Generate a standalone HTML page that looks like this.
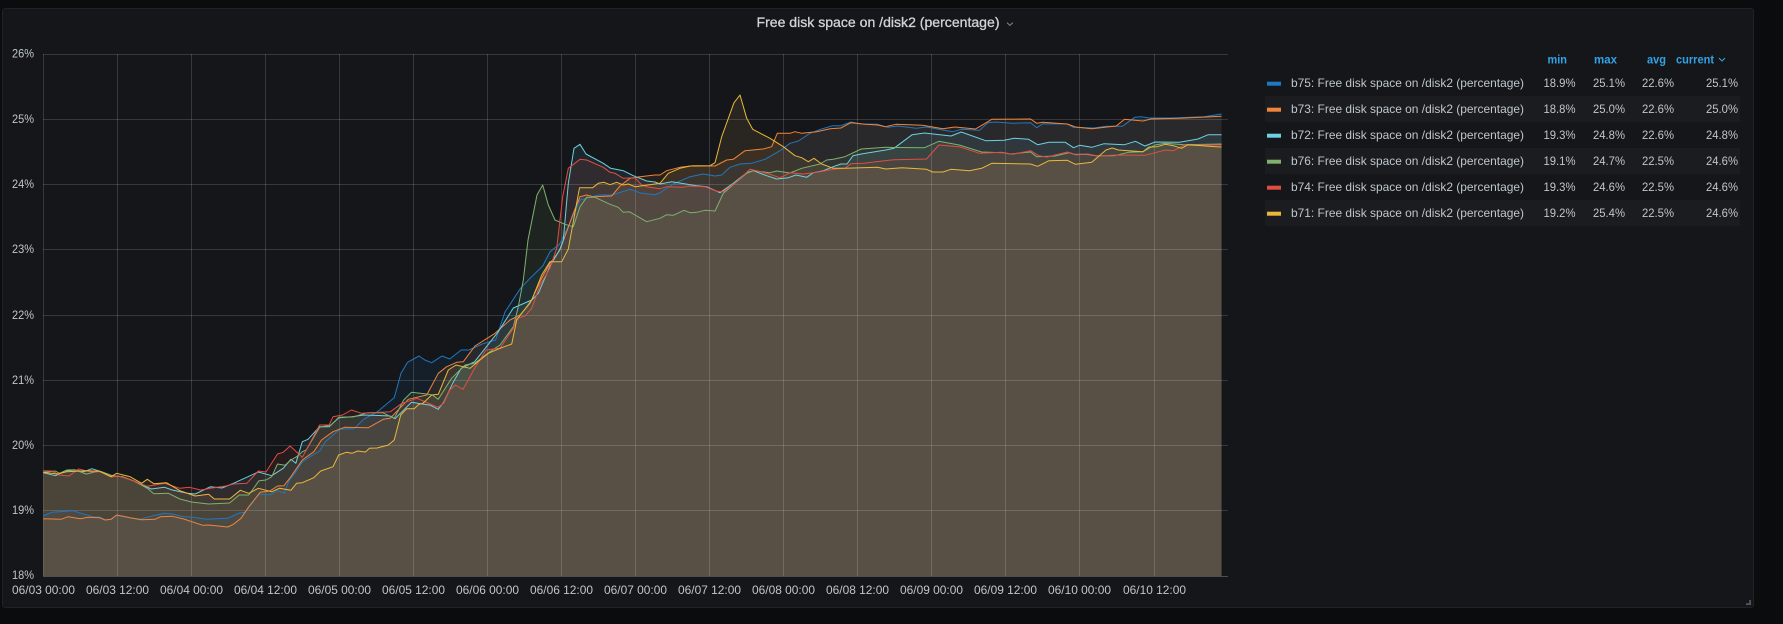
<!DOCTYPE html>
<html>
<head>
<meta charset="utf-8">
<title>Free disk space</title>
<style>
html,body{margin:0;padding:0;width:1783px;height:624px;overflow:hidden;background:#0b0c0e}
svg{display:block}
text{font-family:"Liberation Sans",sans-serif}
.a{font-size:12px;fill:#bfc6cd}
.l{font-size:12px;fill:#bfc6cd}
.h{font-size:12px;fill:#33a2e5;font-weight:700}
.s{fill:none;stroke-width:1;stroke-linejoin:round}
.f{fill-opacity:.1;stroke:none}
.g line{stroke:#fff;stroke-opacity:.15;stroke-width:1}
</style>
</head>
<body>
<svg width="1783" height="624" viewBox="0 0 1783 624" xmlns="http://www.w3.org/2000/svg">
<rect x="0" y="0" width="1783" height="624" fill="#0b0c0e"/>
<rect x="2.5" y="8.5" width="1751" height="599" rx="3" fill="#141619" stroke="#202226"/>

<text x="756.5" y="27" font-size="14" fill="#d0d4d8" stroke="#d0d4d8" stroke-width=".3" textLength="243" lengthAdjust="spacingAndGlyphs">Free disk space on /disk2 (percentage)</text>
<path d="M1007 22.7l2.9 2.7 2.9-2.7" fill="none" stroke="#7b7f84" stroke-width="1.1"/>

<!-- series fill -->
<g id="fills">
<polygon class="f" fill="#1F78C1" points="43.2,576.3 43.2,516 51.7,512.3 59.3,511.7 72.7,510.7 82.3,513.7 93.8,517 99.5,517 105.2,520 111,519.3 116.7,515.3 126.3,517.3 139.7,519.3 153,515.7 164.6,513.3 172.2,514 183.7,516.7 191.4,517 206.7,519.3 227.7,518.3 239.2,513 244.9,512.3 252.6,502.7 258.3,494.3 269.8,494.7 277.5,490.7 284.3,493 288.9,481 294.7,473.3 302.3,461.7 310,456.7 319.6,451 325.3,441.7 336.8,431.7 340.6,429 354,428.7 363.6,419.3 377,412 382.7,407.3 394.2,397.7 401,373.3 407.6,362.3 419,356 424.8,360 431.7,362.7 442,356 449.7,359 461.2,350 468.8,350 482.2,344 495.6,340 505,312 520.5,288.3 530,278.3 542.7,266 550,251.7 559.5,244.3 570,223 580,200 590,197.3 598.3,195 611.7,195 630,189.3 641.7,193.3 655,194.7 660,192.7 673.3,184 690,176.7 703.3,174 715,176 721.7,175 730,167.3 740,164 751.7,163.3 765,159.3 780,150.7 790,143.3 798.3,141 810,133.3 820.4,129.3 832.7,125.7 840.8,125.7 851,122 861.2,124 877.6,124.3 887.8,127.3 898,126 916.3,128.3 926.5,127 947,130.7 953,131.7 961.2,129.3 979.6,130.3 987.8,122.7 996,122 1012.2,123.3 1030.6,122.7 1036.7,127.7 1042.9,123.7 1067.3,124 1073.5,127.3 1093.9,128 1106.1,126.3 1122.4,126.3 1134.7,117.3 1140.8,116.7 1149,118 1171.4,118 1204,116.7 1221.6,114 1221.6,576.3"/>
<polygon class="f" fill="#EF843C" points="43.2,576.3 43.2,518.7 61.2,519.3 68.1,516.7 80.4,518.7 88,517.3 99.5,517.7 105.2,520 111,519.3 116.7,515 130,517.7 141.6,519.7 155,519.3 160.7,516.7 172.2,516.3 183.7,519 202.8,525.3 208.6,525 227.7,527 233.4,524.3 241,518.3 248.8,506.7 260.2,492.3 269.8,491 277.5,486 284,485.7 290.9,476.7 302.3,460 313.8,451.7 321.5,440 333,431.7 344.4,427.3 368.3,427.7 383.3,419.3 390,418.3 393.3,415 408.3,399.3 426.7,395 438.3,373.3 446.7,366.7 456.7,362.3 463.3,361.7 475,346 495,333.3 510,320 520,315 530,303.3 541.7,278.3 550,263.3 560,250 573.3,213.3 580,196.7 586.7,195 593.3,196.7 611.7,196 620,186 630,178.3 640,176.7 655,175 660,175 666.7,170.7 680,167.3 693.3,165.7 715,166 726.7,160 733.3,159.3 745,150.7 763.3,149 771.7,146.7 777.3,133.3 790,133.3 795,131.7 801.7,133.3 816.7,131.7 830,128.7 840.8,128 851,122.7 865.3,124.3 877.6,125 885.7,126.7 895.9,124.3 922.4,125.3 942.9,128.7 955,127 975.5,129 991.8,119.3 1030.6,119 1036.7,123.3 1042.9,122.3 1067.3,124 1075.5,127 1091.8,128.7 1116.3,126 1124.5,119.3 1142.9,121 1151,119 1179.6,118.3 1221.6,116.3 1221.6,576.3"/>
<polygon class="f" fill="#6ED0E0" points="43.2,576.3 43.2,472.7 55.5,475.7 65,471 74.6,470 84.2,471.7 91.8,468.7 101.4,471.7 112.9,476 122.5,476.7 134,481 151.2,489 164.6,487.3 172.2,490 187.5,493.3 195.2,494 210.5,486.7 222,488 233.4,483.3 258.3,472 271.7,475.7 283.2,468.3 290.9,459.3 295.8,463.3 302.3,441.7 308,439.3 319.6,426.7 329.1,426.7 338.7,417.7 352.1,416.7 363.6,415 390.4,416 395,418.7 411.4,402.3 430.5,405.3 438.2,409.3 443.9,401.7 453.5,381.7 461.2,368.3 474.6,361.7 498.3,331.7 513.3,308 531.7,300 538.3,293.3 550,266 559.5,250 563.3,240 568.3,183.3 574,148.3 580,144.3 586,154 603.3,163.3 610.7,168.3 623.3,170.7 633.3,175.7 646.7,181 655,182 660,184 671.7,181.7 696.7,185.7 706.7,186.7 720,192.7 733.3,183.3 746.7,172.7 753.3,170.7 766.7,175.7 776.7,179 788.3,177.7 796,175 806.7,177.3 813.3,172.7 823.3,170.7 833.3,166.7 840.8,164 847,164 853,155.7 861.2,154 885.7,150 893.9,148.3 912.2,134.7 924.5,133 951,136 961.2,132 985.7,140.7 1004,140.3 1014.3,138.3 1028.6,139.3 1037.6,144.7 1049,142.3 1065.3,142.3 1073.5,147.7 1079.6,145.3 1091.8,147.3 1104,143.7 1124.5,144.7 1135.5,141.3 1144.9,146 1155.1,142 1179.6,142.3 1198,139 1208.2,134.7 1221.6,134.7 1221.6,576.3"/>
<polygon class="f" fill="#7EB26D" points="43.2,576.3 43.2,472.3 55.5,471 59.3,473.3 67,470 74.6,469.7 86,474 99.5,471 112.9,476 122.5,476.7 134,481 147.3,488.3 153.8,493.7 168.4,493.3 179.9,499 191.4,502 208.6,504 229.6,503 239.2,495 248.8,495 259,480.7 266,480 271.7,476.7 277.5,464 285,465.3 290.9,460 296.6,456.7 302.3,451.7 306.2,450 319.6,427.3 331,425 338.7,417.3 354,416.7 367.4,412.7 382.7,412.7 394.2,418.3 403.7,400 411.4,392.3 426.7,394 432.5,395 438.2,399.3 451.6,378.3 465,365 474.6,363.3 490,351.7 500,345 513.3,326.7 518.3,306.7 523.3,280 528,240 537,195 542.7,185 548.3,205 555,220 565,224.3 573.3,226.7 580,206.7 586.7,197.3 595,197.3 610,204.3 618.3,207.3 623.3,212.3 629.3,211.7 646.7,221.7 660,218.3 666.7,214.7 673.3,215.3 684,210.3 690,212.7 696.7,212.3 705,210.3 715,211 723.3,193.3 736.7,181.7 746.7,173.3 753.3,170.7 770,172.7 776.7,171 790,173 801.7,168.3 820,164 826.7,160 833.3,159.3 844.9,156.7 861.2,149 885.7,147.3 924.5,147.7 938.8,141.3 959.2,145 981.6,152 1004,152.7 1010.2,154 1030.6,152 1036.7,156.7 1055.1,156 1069.4,152.7 1075.5,154.7 1085.7,154.3 1095.9,155.7 1114.3,155.7 1128.6,152.3 1142.9,151.7 1155,145 1165.3,143.3 1183.7,144.7 1221.6,144 1221.6,576.3"/>
<polygon class="f" fill="#E24D42" points="43.2,576.3 43.2,470.7 51.7,471 59.3,475 68.9,476 78.5,469 90,471.7 100.3,471.7 111,477 118.6,476 134,481 147.3,486.3 164.6,483.3 179.9,488.3 189.4,487.3 200.9,490 210.5,488.3 225.8,486 233.4,484 246.8,483.3 258.3,471 266,472 277.5,454 283.2,452.3 290.1,446 302.3,457.3 319.6,425 329.1,425 333,416.7 342.5,415 351.3,410 361.7,413.3 390.4,411.7 401.9,403.3 417.1,398.3 432.5,405 438.2,407.3 443.9,402.7 449.7,390 455.4,385 463,389.3 474.6,368.3 486,350 500,348.3 513.3,328.3 516.7,318.3 525,316 531.7,308.3 540,285 550,268 556.7,248.3 562.7,196.7 568.3,168.3 580,159.3 586.7,160 603.3,167.3 610,172.3 615,173.3 623.3,178.3 635,177.7 641.7,185 646.7,186.7 660,188.7 666.7,186.7 683.3,187.3 688.3,186 705,186.7 716.7,191.3 723.3,191.7 736.7,181.7 750,169.3 756.7,170.7 770,174.3 780,177.7 790,172.7 803.3,174 820,171.7 833.3,169.3 844.9,168.3 851,163.7 863.3,163.3 893.9,159.7 926.5,159 938.8,145 959.2,146.7 979.6,153.3 1002,152.3 1012.2,154.3 1030.6,150.7 1038.8,155.7 1047,157 1067.3,152 1075.5,154.3 1087.8,154 1098,156 1116.3,155 1144.9,155.3 1165.3,150 1173.5,150.7 1183.7,145.3 1221.6,145 1221.6,576.3"/>
<polygon class="f" fill="#EAB86A" points="43.2,576.3 43.2,472.3 57.4,474 67,471.7 86,470.7 99.5,471.3 111,476.7 116.7,473.3 130,476.7 141.6,483.3 147.3,479.3 153.8,483.7 166.5,482.7 179.9,490.7 195.2,496 208.6,494.3 214.3,499 229.6,499 240.3,490.3 248.8,493.3 258.3,488.3 271.7,491.7 279.4,488.3 290.9,490.3 296.6,483.3 302.3,482.7 313.8,477.7 320.7,471 333,466.7 338.7,455 346.3,452.3 352,453.3 357.8,451 365.5,452 369.3,448.3 377,448 388.4,445 394.2,440 400.7,415 406.7,408.7 414.1,408.7 419,404.3 422.9,403.3 431.7,395 438.3,394.3 448.3,370 456,365 470,368.3 480,360 488.3,353.3 500,348.3 511.7,344 516.7,320 531.7,300 541.7,275 550,261.7 561.7,261.7 568.3,249 579.5,187.7 592.7,187.7 598.3,183.3 604,182.3 610,184.7 616.7,182.3 623.3,185 628.3,184 635,186.7 653.3,184.3 660,183.3 668.3,173.3 680,168.3 690,166 710,165.7 715,162.7 721.7,136.7 734,102.7 740,95 746.7,118.3 752.7,129.3 770,138.3 783.3,146.7 795,155.7 801.7,157.7 808.3,161.7 814,158.3 821.7,164 833.3,168.3 845,168.3 861.2,167.7 877.6,167.3 885.7,169 902,167.7 926.5,169.3 932.7,172 942.9,172 951,169.3 969.4,170.7 981.6,168.3 991.8,163.3 1030.6,164 1037.6,166.3 1049,160.7 1067.3,160.3 1075.5,164.3 1091.8,162.3 1106,150 1112.2,148 1118.4,150 1142.9,151.7 1149,147 1157.1,146.7 1165.3,144.3 1173.5,145.7 1181.6,148.3 1187.8,144.7 1216.3,146.7 1221.6,147 1221.6,576.3"/>
</g>

<!-- grid -->
<g class="g">
<line x1="43" x2="1228" y1="54.5" y2="54.5"/>
<line x1="43" x2="1228" y1="119.5" y2="119.5"/>
<line x1="43" x2="1228" y1="184.5" y2="184.5"/>
<line x1="43" x2="1228" y1="249.5" y2="249.5"/>
<line x1="43" x2="1228" y1="315.5" y2="315.5"/>
<line x1="43" x2="1228" y1="380.5" y2="380.5"/>
<line x1="43" x2="1228" y1="445.5" y2="445.5"/>
<line x1="43" x2="1228" y1="510.5" y2="510.5"/>
<line x1="43.5" x2="43.5" y1="54" y2="576"/>
<line x1="117.5" x2="117.5" y1="54" y2="576"/>
<line x1="191.5" x2="191.5" y1="54" y2="576"/>
<line x1="265.5" x2="265.5" y1="54" y2="576"/>
<line x1="339.5" x2="339.5" y1="54" y2="576"/>
<line x1="413.5" x2="413.5" y1="54" y2="576"/>
<line x1="487.5" x2="487.5" y1="54" y2="576"/>
<line x1="561.5" x2="561.5" y1="54" y2="576"/>
<line x1="635.5" x2="635.5" y1="54" y2="576"/>
<line x1="709.5" x2="709.5" y1="54" y2="576"/>
<line x1="783.5" x2="783.5" y1="54" y2="576"/>
<line x1="857.5" x2="857.5" y1="54" y2="576"/>
<line x1="931.5" x2="931.5" y1="54" y2="576"/>
<line x1="1005.5" x2="1005.5" y1="54" y2="576"/>
<line x1="1079.5" x2="1079.5" y1="54" y2="576"/>
<line x1="1154.5" x2="1154.5" y1="54" y2="576"/>
</g>
<line x1="43" x2="1228" y1="576.5" y2="576.5" stroke="#4c4f55"/>

<!-- series lines -->
<polyline class="s" stroke="#1F78C1" points="43.2,516 51.7,512.3 59.3,511.7 72.7,510.7 82.3,513.7 93.8,517 99.5,517 105.2,520 111,519.3 116.7,515.3 126.3,517.3 139.7,519.3 153,515.7 164.6,513.3 172.2,514 183.7,516.7 191.4,517 206.7,519.3 227.7,518.3 239.2,513 244.9,512.3 252.6,502.7 258.3,494.3 269.8,494.7 277.5,490.7 284.3,493 288.9,481 294.7,473.3 302.3,461.7 310,456.7 319.6,451 325.3,441.7 336.8,431.7 340.6,429 354,428.7 363.6,419.3 377,412 382.7,407.3 394.2,397.7 401,373.3 407.6,362.3 419,356 424.8,360 431.7,362.7 442,356 449.7,359 461.2,350 468.8,350 482.2,344 495.6,340 505,312 520.5,288.3 530,278.3 542.7,266 550,251.7 559.5,244.3 570,223 580,200 590,197.3 598.3,195 611.7,195 630,189.3 641.7,193.3 655,194.7 660,192.7 673.3,184 690,176.7 703.3,174 715,176 721.7,175 730,167.3 740,164 751.7,163.3 765,159.3 780,150.7 790,143.3 798.3,141 810,133.3 820.4,129.3 832.7,125.7 840.8,125.7 851,122 861.2,124 877.6,124.3 887.8,127.3 898,126 916.3,128.3 926.5,127 947,130.7 953,131.7 961.2,129.3 979.6,130.3 987.8,122.7 996,122 1012.2,123.3 1030.6,122.7 1036.7,127.7 1042.9,123.7 1067.3,124 1073.5,127.3 1093.9,128 1106.1,126.3 1122.4,126.3 1134.7,117.3 1140.8,116.7 1149,118 1171.4,118 1204,116.7 1221.6,114"/>
<polyline class="s" stroke="#EF843C" points="43.2,518.7 61.2,519.3 68.1,516.7 80.4,518.7 88,517.3 99.5,517.7 105.2,520 111,519.3 116.7,515 130,517.7 141.6,519.7 155,519.3 160.7,516.7 172.2,516.3 183.7,519 202.8,525.3 208.6,525 227.7,527 233.4,524.3 241,518.3 248.8,506.7 260.2,492.3 269.8,491 277.5,486 284,485.7 290.9,476.7 302.3,460 313.8,451.7 321.5,440 333,431.7 344.4,427.3 368.3,427.7 383.3,419.3 390,418.3 393.3,415 408.3,399.3 426.7,395 438.3,373.3 446.7,366.7 456.7,362.3 463.3,361.7 475,346 495,333.3 510,320 520,315 530,303.3 541.7,278.3 550,263.3 560,250 573.3,213.3 580,196.7 586.7,195 593.3,196.7 611.7,196 620,186 630,178.3 640,176.7 655,175 660,175 666.7,170.7 680,167.3 693.3,165.7 715,166 726.7,160 733.3,159.3 745,150.7 763.3,149 771.7,146.7 777.3,133.3 790,133.3 795,131.7 801.7,133.3 816.7,131.7 830,128.7 840.8,128 851,122.7 865.3,124.3 877.6,125 885.7,126.7 895.9,124.3 922.4,125.3 942.9,128.7 955,127 975.5,129 991.8,119.3 1030.6,119 1036.7,123.3 1042.9,122.3 1067.3,124 1075.5,127 1091.8,128.7 1116.3,126 1124.5,119.3 1142.9,121 1151,119 1179.6,118.3 1221.6,116.3"/>
<polyline class="s" stroke="#6ED0E0" points="43.2,472.7 55.5,475.7 65,471 74.6,470 84.2,471.7 91.8,468.7 101.4,471.7 112.9,476 122.5,476.7 134,481 151.2,489 164.6,487.3 172.2,490 187.5,493.3 195.2,494 210.5,486.7 222,488 233.4,483.3 258.3,472 271.7,475.7 283.2,468.3 290.9,459.3 295.8,463.3 302.3,441.7 308,439.3 319.6,426.7 329.1,426.7 338.7,417.7 352.1,416.7 363.6,415 390.4,416 395,418.7 411.4,402.3 430.5,405.3 438.2,409.3 443.9,401.7 453.5,381.7 461.2,368.3 474.6,361.7 498.3,331.7 513.3,308 531.7,300 538.3,293.3 550,266 559.5,250 563.3,240 568.3,183.3 574,148.3 580,144.3 586,154 603.3,163.3 610.7,168.3 623.3,170.7 633.3,175.7 646.7,181 655,182 660,184 671.7,181.7 696.7,185.7 706.7,186.7 720,192.7 733.3,183.3 746.7,172.7 753.3,170.7 766.7,175.7 776.7,179 788.3,177.7 796,175 806.7,177.3 813.3,172.7 823.3,170.7 833.3,166.7 840.8,164 847,164 853,155.7 861.2,154 885.7,150 893.9,148.3 912.2,134.7 924.5,133 951,136 961.2,132 985.7,140.7 1004,140.3 1014.3,138.3 1028.6,139.3 1037.6,144.7 1049,142.3 1065.3,142.3 1073.5,147.7 1079.6,145.3 1091.8,147.3 1104,143.7 1124.5,144.7 1135.5,141.3 1144.9,146 1155.1,142 1179.6,142.3 1198,139 1208.2,134.7 1221.6,134.7"/>
<polyline class="s" stroke="#7EB26D" points="43.2,472.3 55.5,471 59.3,473.3 67,470 74.6,469.7 86,474 99.5,471 112.9,476 122.5,476.7 134,481 147.3,488.3 153.8,493.7 168.4,493.3 179.9,499 191.4,502 208.6,504 229.6,503 239.2,495 248.8,495 259,480.7 266,480 271.7,476.7 277.5,464 285,465.3 290.9,460 296.6,456.7 302.3,451.7 306.2,450 319.6,427.3 331,425 338.7,417.3 354,416.7 367.4,412.7 382.7,412.7 394.2,418.3 403.7,400 411.4,392.3 426.7,394 432.5,395 438.2,399.3 451.6,378.3 465,365 474.6,363.3 490,351.7 500,345 513.3,326.7 518.3,306.7 523.3,280 528,240 537,195 542.7,185 548.3,205 555,220 565,224.3 573.3,226.7 580,206.7 586.7,197.3 595,197.3 610,204.3 618.3,207.3 623.3,212.3 629.3,211.7 646.7,221.7 660,218.3 666.7,214.7 673.3,215.3 684,210.3 690,212.7 696.7,212.3 705,210.3 715,211 723.3,193.3 736.7,181.7 746.7,173.3 753.3,170.7 770,172.7 776.7,171 790,173 801.7,168.3 820,164 826.7,160 833.3,159.3 844.9,156.7 861.2,149 885.7,147.3 924.5,147.7 938.8,141.3 959.2,145 981.6,152 1004,152.7 1010.2,154 1030.6,152 1036.7,156.7 1055.1,156 1069.4,152.7 1075.5,154.7 1085.7,154.3 1095.9,155.7 1114.3,155.7 1128.6,152.3 1142.9,151.7 1155,145 1165.3,143.3 1183.7,144.7 1221.6,144"/>
<polyline class="s" stroke="#E24D42" points="43.2,470.7 51.7,471 59.3,475 68.9,476 78.5,469 90,471.7 100.3,471.7 111,477 118.6,476 134,481 147.3,486.3 164.6,483.3 179.9,488.3 189.4,487.3 200.9,490 210.5,488.3 225.8,486 233.4,484 246.8,483.3 258.3,471 266,472 277.5,454 283.2,452.3 290.1,446 302.3,457.3 319.6,425 329.1,425 333,416.7 342.5,415 351.3,410 361.7,413.3 390.4,411.7 401.9,403.3 417.1,398.3 432.5,405 438.2,407.3 443.9,402.7 449.7,390 455.4,385 463,389.3 474.6,368.3 486,350 500,348.3 513.3,328.3 516.7,318.3 525,316 531.7,308.3 540,285 550,268 556.7,248.3 562.7,196.7 568.3,168.3 580,159.3 586.7,160 603.3,167.3 610,172.3 615,173.3 623.3,178.3 635,177.7 641.7,185 646.7,186.7 660,188.7 666.7,186.7 683.3,187.3 688.3,186 705,186.7 716.7,191.3 723.3,191.7 736.7,181.7 750,169.3 756.7,170.7 770,174.3 780,177.7 790,172.7 803.3,174 820,171.7 833.3,169.3 844.9,168.3 851,163.7 863.3,163.3 893.9,159.7 926.5,159 938.8,145 959.2,146.7 979.6,153.3 1002,152.3 1012.2,154.3 1030.6,150.7 1038.8,155.7 1047,157 1067.3,152 1075.5,154.3 1087.8,154 1098,156 1116.3,155 1144.9,155.3 1165.3,150 1173.5,150.7 1183.7,145.3 1221.6,145"/>
<polyline class="s" stroke="#EAB839" points="43.2,472.3 57.4,474 67,471.7 86,470.7 99.5,471.3 111,476.7 116.7,473.3 130,476.7 141.6,483.3 147.3,479.3 153.8,483.7 166.5,482.7 179.9,490.7 195.2,496 208.6,494.3 214.3,499 229.6,499 240.3,490.3 248.8,493.3 258.3,488.3 271.7,491.7 279.4,488.3 290.9,490.3 296.6,483.3 302.3,482.7 313.8,477.7 320.7,471 333,466.7 338.7,455 346.3,452.3 352,453.3 357.8,451 365.5,452 369.3,448.3 377,448 388.4,445 394.2,440 400.7,415 406.7,408.7 414.1,408.7 419,404.3 422.9,403.3 431.7,395 438.3,394.3 448.3,370 456,365 470,368.3 480,360 488.3,353.3 500,348.3 511.7,344 516.7,320 531.7,300 541.7,275 550,261.7 561.7,261.7 568.3,249 579.5,187.7 592.7,187.7 598.3,183.3 604,182.3 610,184.7 616.7,182.3 623.3,185 628.3,184 635,186.7 653.3,184.3 660,183.3 668.3,173.3 680,168.3 690,166 710,165.7 715,162.7 721.7,136.7 734,102.7 740,95 746.7,118.3 752.7,129.3 770,138.3 783.3,146.7 795,155.7 801.7,157.7 808.3,161.7 814,158.3 821.7,164 833.3,168.3 845,168.3 861.2,167.7 877.6,167.3 885.7,169 902,167.7 926.5,169.3 932.7,172 942.9,172 951,169.3 969.4,170.7 981.6,168.3 991.8,163.3 1030.6,164 1037.6,166.3 1049,160.7 1067.3,160.3 1075.5,164.3 1091.8,162.3 1106,150 1112.2,148 1118.4,150 1142.9,151.7 1149,147 1157.1,146.7 1165.3,144.3 1173.5,145.7 1181.6,148.3 1187.8,144.7 1216.3,146.7 1221.6,147"/>

<!-- y axis labels -->
<g class="a">
<text class="a" x="12" y="57.5" textLength="22" lengthAdjust="spacingAndGlyphs">26%</text>
<text class="a" x="12" y="123" textLength="22" lengthAdjust="spacingAndGlyphs">25%</text>
<text class="a" x="12" y="188" textLength="22" lengthAdjust="spacingAndGlyphs">24%</text>
<text class="a" x="12" y="253" textLength="22" lengthAdjust="spacingAndGlyphs">23%</text>
<text class="a" x="12" y="319" textLength="22" lengthAdjust="spacingAndGlyphs">22%</text>
<text class="a" x="12" y="384" textLength="22" lengthAdjust="spacingAndGlyphs">21%</text>
<text class="a" x="12" y="449" textLength="22" lengthAdjust="spacingAndGlyphs">20%</text>
<text class="a" x="12" y="514" textLength="22" lengthAdjust="spacingAndGlyphs">19%</text>
<text class="a" x="12" y="579" textLength="22" lengthAdjust="spacingAndGlyphs">18%</text>
</g>

<!-- x axis labels -->
<g text-anchor="middle">
<text class="a" x="43.5" y="594" textLength="63" lengthAdjust="spacingAndGlyphs">06/03 00:00</text>
<text class="a" x="117.5" y="594" textLength="63" lengthAdjust="spacingAndGlyphs">06/03 12:00</text>
<text class="a" x="191.5" y="594" textLength="63" lengthAdjust="spacingAndGlyphs">06/04 00:00</text>
<text class="a" x="265.5" y="594" textLength="63" lengthAdjust="spacingAndGlyphs">06/04 12:00</text>
<text class="a" x="339.5" y="594" textLength="63" lengthAdjust="spacingAndGlyphs">06/05 00:00</text>
<text class="a" x="413.5" y="594" textLength="63" lengthAdjust="spacingAndGlyphs">06/05 12:00</text>
<text class="a" x="487.5" y="594" textLength="63" lengthAdjust="spacingAndGlyphs">06/06 00:00</text>
<text class="a" x="561.5" y="594" textLength="63" lengthAdjust="spacingAndGlyphs">06/06 12:00</text>
<text class="a" x="635.5" y="594" textLength="63" lengthAdjust="spacingAndGlyphs">06/07 00:00</text>
<text class="a" x="709.5" y="594" textLength="63" lengthAdjust="spacingAndGlyphs">06/07 12:00</text>
<text class="a" x="783.5" y="594" textLength="63" lengthAdjust="spacingAndGlyphs">06/08 00:00</text>
<text class="a" x="857.5" y="594" textLength="63" lengthAdjust="spacingAndGlyphs">06/08 12:00</text>
<text class="a" x="931.5" y="594" textLength="63" lengthAdjust="spacingAndGlyphs">06/09 00:00</text>
<text class="a" x="1005.5" y="594" textLength="63" lengthAdjust="spacingAndGlyphs">06/09 12:00</text>
<text class="a" x="1079.5" y="594" textLength="63" lengthAdjust="spacingAndGlyphs">06/10 00:00</text>
<text class="a" x="1154.5" y="594" textLength="63" lengthAdjust="spacingAndGlyphs">06/10 12:00</text>
</g>

<!-- legend -->
<rect x="1265" y="96" width="475" height="26" fill="#1a1c1f"/>
<rect x="1265" y="148" width="475" height="26" fill="#1a1c1f"/>
<rect x="1265" y="200" width="475" height="26" fill="#1a1c1f"/>

<text class="h" x="1547.5" y="63.5" textLength="19.5" lengthAdjust="spacingAndGlyphs">min</text>
<text class="h" x="1594" y="63.5" textLength="23" lengthAdjust="spacingAndGlyphs">max</text>
<text class="h" x="1647" y="63.5" textLength="19" lengthAdjust="spacingAndGlyphs">avg</text>
<text class="h" x="1676" y="63.5" textLength="38" lengthAdjust="spacingAndGlyphs">current</text>
<path d="M1719 58l3 3 3-3" fill="none" stroke="#33a2e5" stroke-width="1.1"/>

<rect x="1267" y="81.7" width="14" height="4" fill="#1F78C1"/>
<rect x="1267" y="107.7" width="14" height="4" fill="#EF843C"/>
<rect x="1267" y="133.7" width="14" height="4" fill="#6ED0E0"/>
<rect x="1267" y="159.7" width="14" height="4" fill="#7EB26D"/>
<rect x="1267" y="185.7" width="14" height="4" fill="#E24D42"/>
<rect x="1267" y="211.7" width="14" height="4" fill="#EAB839"/>

<text class="l" x="1291" y="87" textLength="233" lengthAdjust="spacingAndGlyphs">b75: Free disk space on /disk2 (percentage)</text>
<text class="l" x="1291" y="113" textLength="233" lengthAdjust="spacingAndGlyphs">b73: Free disk space on /disk2 (percentage)</text>
<text class="l" x="1291" y="139" textLength="233" lengthAdjust="spacingAndGlyphs">b72: Free disk space on /disk2 (percentage)</text>
<text class="l" x="1291" y="165" textLength="233" lengthAdjust="spacingAndGlyphs">b76: Free disk space on /disk2 (percentage)</text>
<text class="l" x="1291" y="191" textLength="233" lengthAdjust="spacingAndGlyphs">b74: Free disk space on /disk2 (percentage)</text>
<text class="l" x="1291" y="217" textLength="233" lengthAdjust="spacingAndGlyphs">b71: Free disk space on /disk2 (percentage)</text>

<g text-anchor="end">
<text class="l" x="1575.5" y="87" textLength="32" lengthAdjust="spacingAndGlyphs">18.9%</text>
<text class="l" x="1625" y="87" textLength="32" lengthAdjust="spacingAndGlyphs">25.1%</text>
<text class="l" x="1674" y="87" textLength="32" lengthAdjust="spacingAndGlyphs">22.6%</text>
<text class="l" x="1738" y="87" textLength="32" lengthAdjust="spacingAndGlyphs">25.1%</text>

<text class="l" x="1575.5" y="113" textLength="32" lengthAdjust="spacingAndGlyphs">18.8%</text>
<text class="l" x="1625" y="113" textLength="32" lengthAdjust="spacingAndGlyphs">25.0%</text>
<text class="l" x="1674" y="113" textLength="32" lengthAdjust="spacingAndGlyphs">22.6%</text>
<text class="l" x="1738" y="113" textLength="32" lengthAdjust="spacingAndGlyphs">25.0%</text>

<text class="l" x="1575.5" y="139" textLength="32" lengthAdjust="spacingAndGlyphs">19.3%</text>
<text class="l" x="1625" y="139" textLength="32" lengthAdjust="spacingAndGlyphs">24.8%</text>
<text class="l" x="1674" y="139" textLength="32" lengthAdjust="spacingAndGlyphs">22.6%</text>
<text class="l" x="1738" y="139" textLength="32" lengthAdjust="spacingAndGlyphs">24.8%</text>

<text class="l" x="1575.5" y="165" textLength="32" lengthAdjust="spacingAndGlyphs">19.1%</text>
<text class="l" x="1625" y="165" textLength="32" lengthAdjust="spacingAndGlyphs">24.7%</text>
<text class="l" x="1674" y="165" textLength="32" lengthAdjust="spacingAndGlyphs">22.5%</text>
<text class="l" x="1738" y="165" textLength="32" lengthAdjust="spacingAndGlyphs">24.6%</text>

<text class="l" x="1575.5" y="191" textLength="32" lengthAdjust="spacingAndGlyphs">19.3%</text>
<text class="l" x="1625" y="191" textLength="32" lengthAdjust="spacingAndGlyphs">24.6%</text>
<text class="l" x="1674" y="191" textLength="32" lengthAdjust="spacingAndGlyphs">22.5%</text>
<text class="l" x="1738" y="191" textLength="32" lengthAdjust="spacingAndGlyphs">24.6%</text>

<text class="l" x="1575.5" y="217" textLength="32" lengthAdjust="spacingAndGlyphs">19.2%</text>
<text class="l" x="1625" y="217" textLength="32" lengthAdjust="spacingAndGlyphs">25.4%</text>
<text class="l" x="1674" y="217" textLength="32" lengthAdjust="spacingAndGlyphs">22.5%</text>
<text class="l" x="1738" y="217" textLength="32" lengthAdjust="spacingAndGlyphs">24.6%</text>
</g>

<!-- resize handle -->
<path d="M1751 600h-1.7v3.3h-3.3v1.7h5z" fill="#55585e"/>
</svg>
</body>
</html>
